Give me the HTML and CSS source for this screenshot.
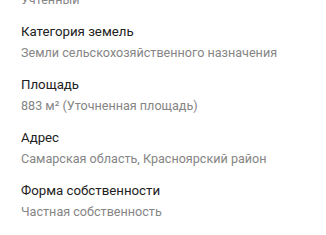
FILE: index.html
```
<!DOCTYPE html>
<html lang="ru">
<head>
<meta charset="utf-8">
<link rel="stylesheet" href="styles.css">
</head>
<body>
<div class="props">
  <div class="prop">
    <div class="value">Учтенный</div>
  </div>
  <div class="prop">
    <div class="label">Категория земель</div>
    <div class="value">Земли сельскохозяйственного назначения</div>
  </div>
  <div class="prop">
    <div class="label">Площадь</div>
    <div class="value">883 м² (Уточненная площадь)</div>
  </div>
  <div class="prop">
    <div class="label">Адрес</div>
    <div class="value">Самарская область, Красноярский район</div>
  </div>
  <div class="prop">
    <div class="label">Форма собственности</div>
    <div class="value">Частная собственность</div>
  </div>
</div>
</body>
</html>
```
FILE: styles.css
```
html, body {
  margin: 0;
  padding: 0;
  background: #ffffff;
}
body {
  font-family: Roboto, "Noto Sans", sans-serif;
  overflow: hidden;
}
.props {
  display: flex;
  flex-direction: column;
  gap: 12px;
  margin-top: -11.5px;
  padding-left: 21px;
}
.label {
  font-size: 13.25px;
  line-height: 20px;
  color: #212121;
}
.value {
  margin-top: 1px;
  font-size: 12.6px;
  line-height: 20px;
  color: #858585;
}
```
